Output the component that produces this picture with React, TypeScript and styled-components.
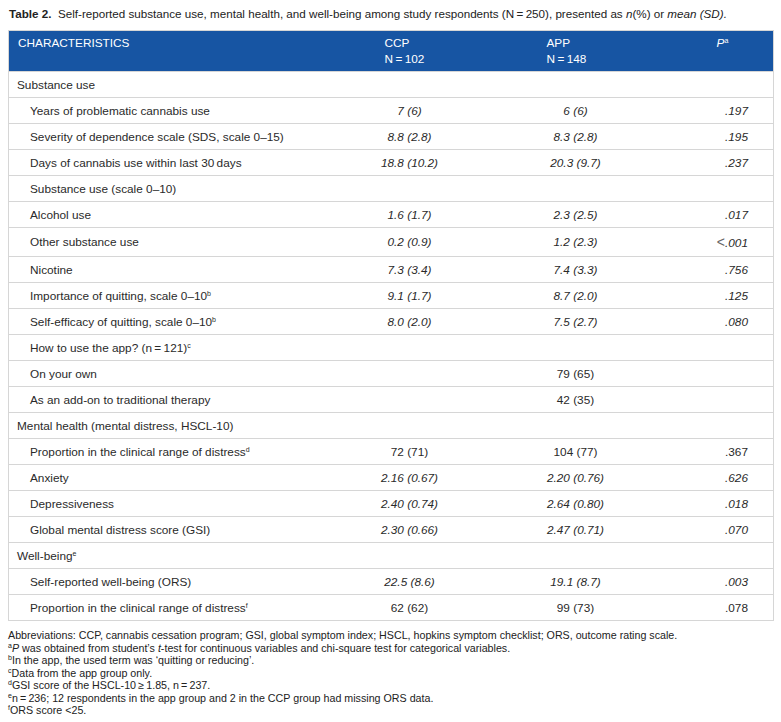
import React from 'react';
import styled, { createGlobalStyle } from 'styled-components';

const GlobalStyle = createGlobalStyle`
  body {
    margin: 0;
    background: #ffffff;
    font-family: "Liberation Sans", Arial, sans-serif;
    color: #2a2a2a;
  }
`;

const Page = styled.div`
  padding: 7px 8px 0 8px;
`;

const Caption = styled.div`
  font-size: 11.65px;
  line-height: 14px;
  color: #222;
  padding-left: 1px;
  margin-bottom: 9px;
  b {
    font-weight: bold;
  }
`;

const Sup = styled.sup`
  font-size: 7px;
  line-height: 0;
  vertical-align: 4px;
  font-style: normal;
`;

const Table = styled.table`
  width: 765px;
  table-layout: fixed;
  border-collapse: collapse;
  border: 1px solid #d6d6d6;
  font-size: 11.8px;
`;

const HeadCell = styled.th`
  background: #1755a3;
  color: #ffffff;
  font-weight: normal;
  text-align: left;
  vertical-align: top;
  height: 41px;
  box-sizing: border-box;
  padding: 4px 9px 0 9px;
  line-height: 16px;
  font-size: 11.8px;
`;

const BodyRow = styled.tr<{ $tall?: boolean }>`
  height: ${(p) => (p.$tall ? '29px' : '26px')};
  td {
    border-top: 1px solid #d6d6d6;
  }
`;

const LabelCell = styled.td<{ $level: 0 | 1 }>`
  padding: 0 0 0 ${(p) => (p.$level === 0 ? '8px' : '21px')};
  white-space: nowrap;
`;

const ValueCell = styled.td<{ $italic?: boolean }>`
  text-align: center;
  padding: 0 94px 0 0;
  font-style: ${(p) => (p.$italic ? 'italic' : 'normal')};
  white-space: nowrap;
`;

const PCell = styled.td<{ $italic?: boolean }>`
  text-align: right;
  padding: 0 25px 0 0;
  font-style: ${(p) => (p.$italic ? 'italic' : 'normal')};
`;

const Lt = styled.span`
  font-style: normal;
  font-size: 14px;
  color: #666;
`;

const Notes = styled.div`
  margin-top: 8px;
  font-size: 10.7px;
  line-height: 12.5px;
  color: #222;
`;

type Row = {
  label: React.ReactNode;
  level: 0 | 1;
  ccp?: string;
  app?: string;
  p?: string;
  mean?: boolean;
  pPlain?: boolean;
  tall?: boolean;
};

const rows: Row[] = [
  { label: 'Substance use', level: 0 },
  { label: 'Years of problematic cannabis use', level: 1, ccp: '7 (6)', app: '6 (6)', p: '.197', mean: true },
  { label: 'Severity of dependence scale (SDS, scale 0–15)', level: 1, ccp: '8.8 (2.8)', app: '8.3 (2.8)', p: '.195', mean: true },
  { label: 'Days of cannabis use within last 30\u2009days', level: 1, ccp: '18.8 (10.2)', app: '20.3 (9.7)', p: '.237', mean: true },
  { label: 'Substance use (scale 0–10)', level: 1 },
  { label: 'Alcohol use', level: 1, ccp: '1.6 (1.7)', app: '2.3 (2.5)', p: '.017', mean: true },
  { label: 'Other substance use', level: 1, ccp: '0.2 (0.9)', app: '1.2 (2.3)', p: '<.001', mean: true, tall: true },
  { label: 'Nicotine', level: 1, ccp: '7.3 (3.4)', app: '7.4 (3.3)', p: '.756', mean: true },
  { label: <>Importance of quitting, scale 0–10<Sup>b</Sup></>, level: 1, ccp: '9.1 (1.7)', app: '8.7 (2.0)', p: '.125', mean: true },
  { label: <>Self-efficacy of quitting, scale 0–10<Sup>b</Sup></>, level: 1, ccp: '8.0 (2.0)', app: '7.5 (2.7)', p: '.080', mean: true },
  { label: <>How to use the app? (n{'\u2009=\u2009'}121)<Sup>c</Sup></>, level: 1 },
  { label: 'On your own', level: 1, app: '79 (65)' },
  { label: 'As an add-on to traditional therapy', level: 1, app: '42 (35)' },
  { label: 'Mental health (mental distress, HSCL-10)', level: 0 },
  { label: <>Proportion in the clinical range of distress<Sup>d</Sup></>, level: 1, ccp: '72 (71)', app: '104 (77)', p: '.367', pPlain: true },
  { label: 'Anxiety', level: 1, ccp: '2.16 (0.67)', app: '2.20 (0.76)', p: '.626', mean: true },
  { label: 'Depressiveness', level: 1, ccp: '2.40 (0.74)', app: '2.64 (0.80)', p: '.018', mean: true },
  { label: 'Global mental distress score (GSI)', level: 1, ccp: '2.30 (0.66)', app: '2.47 (0.71)', p: '.070', mean: true },
  { label: <>Well-being<Sup>e</Sup></>, level: 0 },
  { label: 'Self-reported well-being (ORS)', level: 1, ccp: '22.5 (8.6)', app: '19.1 (8.7)', p: '.003', mean: true },
  { label: <>Proportion in the clinical range of distress<Sup>f</Sup></>, level: 1, ccp: '62 (62)', app: '99 (73)', p: '.078', pPlain: true },
];

const App: React.FC = () => {
  return (
    <Page>
      <GlobalStyle />
      <Caption>
        <b>Table 2.</b>&nbsp; Self-reported substance use, mental health, and well-being among study respondents
        (N{'\u2009=\u2009'}250), presented as <i>n</i>(%) or <i>mean (SD).</i>
      </Caption>
      <Table>
        <colgroup>
          <col style={{ width: 367 }} />
          <col style={{ width: 162 }} />
          <col style={{ width: 170 }} />
          <col style={{ width: 66 }} />
        </colgroup>
        <thead>
          <tr>
            <HeadCell>CHARACTERISTICS</HeadCell>
            <HeadCell>
              CCP
              <br />
              N{'\u2009=\u2009'}102
            </HeadCell>
            <HeadCell>
              APP
              <br />
              N{'\u2009=\u2009'}148
            </HeadCell>
            <HeadCell>
              <i>P</i>
              <Sup>a</Sup>
            </HeadCell>
          </tr>
        </thead>
        <tbody>
          {rows.map((r, i) => (
            <BodyRow key={i} $tall={r.tall}>
              <LabelCell $level={r.level}>{r.label}</LabelCell>
              <ValueCell $italic={r.mean}>{r.ccp}</ValueCell>
              <ValueCell $italic={r.mean}>{r.app}</ValueCell>
              <PCell $italic={!r.pPlain}>
                {r.p && r.p.startsWith('<') ? (
                  <>
                    <Lt>&lt;</Lt>
                    {r.p.slice(1)}
                  </>
                ) : (
                  r.p
                )}
              </PCell>
            </BodyRow>
          ))}
        </tbody>
      </Table>
      <Notes>
        <div>
          Abbreviations: CCP, cannabis cessation program; GSI, global symptom index; HSCL, hopkins symptom checklist; ORS,
          outcome rating scale.
        </div>
        <div>
          <Sup>a</Sup>
          <i>P</i> was obtained from student’s <i>t</i>-test for continuous variables and chi-square test for categorical
          variables.
        </div>
        <div>
          <Sup>b</Sup>In the app, the used term was ‘quitting or reducing’.
        </div>
        <div>
          <Sup>c</Sup>Data from the app group only.
        </div>
        <div>
          <Sup>d</Sup>GSI score of the HSCL-10{'\u2009≥\u2009'}1.85, n{'\u2009=\u2009'}237.
        </div>
        <div>
          <Sup>e</Sup>n{'\u2009=\u2009'}236; 12 respondents in the app group and 2 in the CCP group had missing ORS data.
        </div>
        <div>
          <Sup>f</Sup>ORS score {'<'}25.
        </div>
      </Notes>
    </Page>
  );
};
export default App;
